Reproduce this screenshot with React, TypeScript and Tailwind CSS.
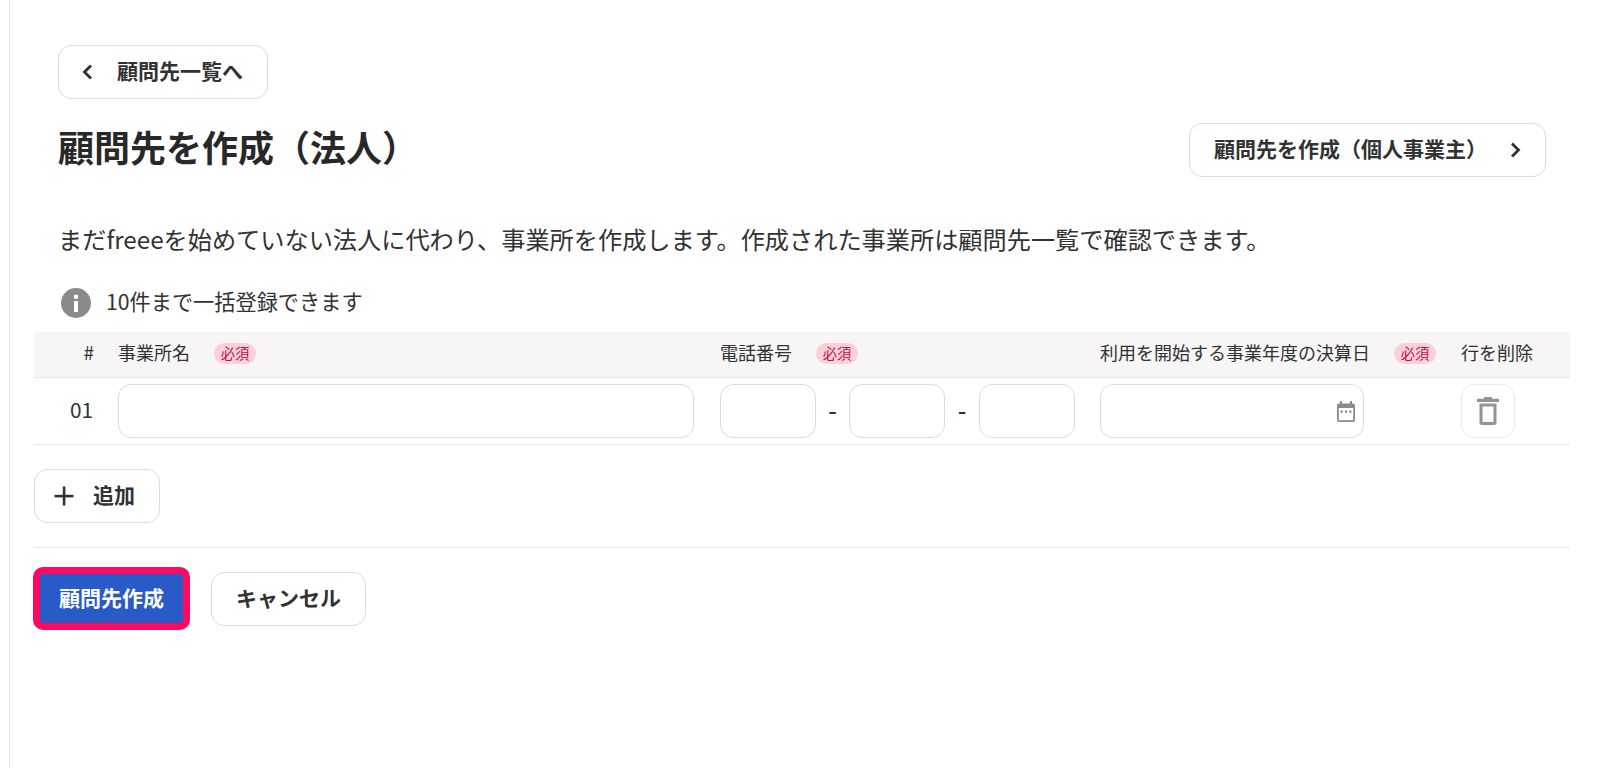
const font = { fontFamily: '"Noto Sans CJK JP", "Noto Sans", sans-serif' };

function Badge() {
  return (
    <span className="inline-flex h-[21px] w-[42px] shrink-0 items-center justify-center rounded-full bg-[#fbd0d9] text-[14.3px] text-[#b4154a]">
      <span className="pb-px">必須</span>
    </span>
  );
}

function Chevron({ dir }: { dir: "left" | "right" }) {
  return (
    <svg width="12" height="18" viewBox="0 0 12 18" className="shrink-0" fill="none" stroke="#323232" strokeWidth="2.8">
      <path d={dir === "left" ? "M10 2.500 3.500 9l6.500 6.500" : "M2 2.500 8.500 9 2 15.500"} />
    </svg>
  );
}

const btn =
  "inline-flex items-center rounded-[13px] border border-[#dcdcdc] bg-white text-[21px] font-bold text-[#323232]";
const field = "h-[54px] rounded-[13px] border border-[#dcdcdc] bg-white outline-none";

export default function App() {
  return (
    <div style={font} className="min-h-[768px] bg-white text-[#323232]">
      <div className="ml-[9px] min-h-[768px] border-l border-[#e6e6e6] pl-[24px] pr-[36px] pt-[45px]">
        <div className="px-[24px]">
          <button className={`${btn} h-[54px] w-[210px] pl-[22px]`}>
            <Chevron dir="left" />
            <span className="ml-[24px] pb-[2px]">顧問先一覧へ</span>
          </button>
          <div className="mt-[24px] flex h-[54px] items-center justify-between">
            <h1 className="pb-[9px] text-[36px] font-bold leading-none text-[#282828]">顧問先を作成（法人）</h1>
            <button className={`${btn} h-[54px] w-[357px] pl-[24px]`}>
              <span className="pb-[2px]">顧問先を作成（個人事業主）</span>
              <span className="ml-[23px] flex">
                <Chevron dir="right" />
              </span>
            </button>
          </div>
          <p className="mt-[46px] h-[36px] whitespace-nowrap text-[24.2px] leading-[32px]">
            まだfreeeを始めていない法人に代わり、事業所を作成します。作成された事業所は顧問先一覧で確認できます。
          </p>
          <div className="mt-[29px] flex h-[30px] items-center pl-[3px] text-[21.2px]">
            <svg width="30" height="30" viewBox="0 0 30 30" className="shrink-0">
              <circle cx="15" cy="15" r="15" fill="#8c8989" />
              <rect x="13" y="13" width="4" height="11" rx="0.5" fill="#fff" />
              <circle cx="15" cy="8.800" r="2.300" fill="#fff" />
            </svg>
            <span className="ml-[15px] pb-[5px]">10件まで一括登録できます</span>
          </div>
        </div>

        <div className="mt-[14px] grid h-[46px] grid-cols-[84px_602px_380px_361px_1fr] items-center border-b border-[#e6e6e6] bg-[#f7f5f5] pb-[2px] text-[18px]">
          <span className="pb-[2px] pr-[24px] text-right text-[19px]">#</span>
          <span className="flex items-center">
            <span className="pb-[2px]">事業所名</span>
            <span className="ml-[24px] flex">
              <Badge />
            </span>
          </span>
          <span className="flex items-center">
            <span className="pb-[2px]">電話番号</span>
            <span className="ml-[24px] flex">
              <Badge />
            </span>
          </span>
          <span className="flex items-center justify-between pr-[25px]">
            <span className="pb-[2px]">利用を開始する事業年度の決算日</span>
            <Badge />
          </span>
          <span className="pb-[2px]">行を削除</span>
        </div>

        <div className="grid h-[67px] grid-cols-[84px_602px_380px_361px_1fr] items-center border-b border-[#e6e6e6]">
          <span className="pb-[2px] pr-[25px] text-right text-[20.8px]">01</span>
          <div className="pr-[26px]">
            <input className={`${field} w-full`} />
          </div>
          <div className="flex items-center text-[24px] font-medium">
            <input className={`${field} w-[96px]`} />
            <span className="w-[33px] pb-[3px] text-center">-</span>
            <input className={`${field} w-[96px]`} />
            <span className="w-[34px] pb-[3px] text-center">-</span>
            <input className={`${field} w-[96px]`} />
          </div>
          <div className="relative w-[264px]">
            <input className={`${field} w-full`} />
            <svg width="18" height="21" viewBox="0 0 18 21" className="absolute right-[9px] top-[17px]" fill="#8c8989">
              <path d="M3 0h2v2.500h8V0h2v2.500h1A2 2 0 0 1 18 4.500V19a2 2 0 0 1-2 2H2a2 2 0 0 1-2-2V4.500A2 2 0 0 1 2 2.500h1z" />
              <rect x="1.800" y="7" width="14.400" height="12.200" fill="#fff" />
              <rect x="3.500" y="9.500" width="2.200" height="2.200" />
              <rect x="7.900" y="9.500" width="2.200" height="2.200" />
              <rect x="12.300" y="9.500" width="2.200" height="2.200" />
            </svg>
          </div>
          <button className="flex h-[54px] w-[54px] items-center justify-center rounded-[13px] border border-[#ebebeb] bg-white">
            <svg width="22" height="28" viewBox="0 0 22 28" fill="#949292">
              <path d="M7 0h8v1.800h7V5H0V1.800h7z" />
              <path fillRule="evenodd" d="M2.500 6.500h17v19a2.500 2.500 0 0 1-2.500 2.500H5a2.500 2.500 0 0 1-2.500-2.500zm3 3v15.500h11V9.500z" />
            </svg>
          </button>
        </div>

        <button className={`${btn} mt-[24px] h-[54px] w-[126px] pl-[19px]`}>
          <svg width="20" height="20" viewBox="0 0 20 20" className="shrink-0" fill="#323232">
            <rect x="8.800" y="0.500" width="2.600" height="19" />
            <rect x="0.500" y="8.800" width="19" height="2.600" />
          </svg>
          <span className="ml-[19px] pb-[2px]">追加</span>
        </button>

        <div className="mt-[24px] border-t border-[#e6e6e6]" />

        <div className="mt-[19px] flex items-center">
          <button className="-ml-px flex h-[63px] w-[157px] items-center justify-center rounded-[10px] border-[7px] border-[#ff0a5f] bg-[#285ac8] text-[21px] font-bold text-white">
            <span className="pb-[2px]">顧問先作成</span>
          </button>
          <button className={`${btn} ml-[21px] h-[54px] w-[155px] justify-center`}>
            <span className="pb-[2px]">キャンセル</span>
          </button>
        </div>
      </div>
    </div>
  );
}
